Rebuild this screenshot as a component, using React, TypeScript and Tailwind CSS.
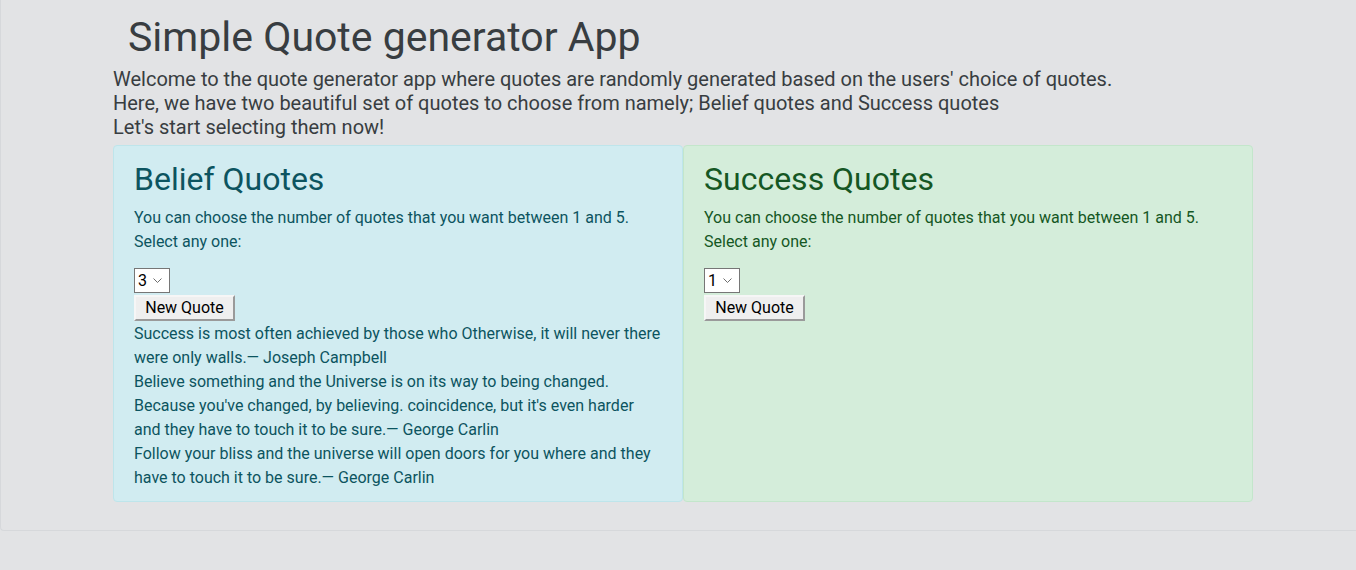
import { useState } from 'react';

const beliefQuotes = [
  'Success is most often achieved by those who Otherwise, it will never there were only walls.— Joseph Campbell',
  "Believe something and the Universe is on its way to being changed. Because you've changed, by believing. coincidence, but it's even harder and they have to touch it to be sure.— George Carlin",
  'Follow your bliss and the universe will open doors for you where and they have to touch it to be sure.— George Carlin',
];

function QuoteCard({
  title,
  tone,
  initial,
  quotes,
}: {
  title: string;
  tone: 'info' | 'success';
  initial: string;
  quotes: string[];
}) {
  const [count, setCount] = useState(initial);
  const box =
    tone === 'info'
      ? 'bg-[#d1ecf1] border-[#bee5eb] text-[#0c5460]'
      : 'bg-[#d4edda] border-[#c3e6cb] text-[#155724]';

  return (
    <div className={`flex-1 rounded border px-5 pt-[14px] pb-[11px] ${box}`}>
      {/* Card heading */}
      <h2 className="mb-2 text-[32px] leading-[1.2]">{title}</h2>
      <p className="text-base leading-6">
        You can choose the number of quotes that you want between 1 and 5.
        <br />
        Select any one:
      </p>

      <div className="mt-[14px] flex">
        <div className="relative">
          <select
            value={count}
            onChange={(e) => setCount(e.target.value)}
            className="block h-[25px] w-9 appearance-none border border-[#767676] bg-white pl-[3px] text-base leading-none text-black outline-none"
          >
            {['1', '2', '3', '4', '5'].map((n) => (
              <option key={n}>{n}</option>
            ))}
          </select>
          <svg
            className="pointer-events-none absolute right-[8px] top-[10px]"
            width="9"
            height="6"
            viewBox="0 0 9 6"
            fill="none"
          >
            <path d="M0.5 0.5 L4.5 4.5 L8.5 0.5" stroke="#6d6d6d" strokeWidth="1" />
          </svg>
        </div>
      </div>
      <button className="mt-[2px] block h-[26px] w-[101px] border-2 border-t-[#f6f6f6] border-l-[#f6f6f6] border-r-[#9a9a9a] border-b-[#9a9a9a] bg-[#efefef] text-base leading-none text-black">
        New Quote
      </button>

      <div className="mt-px text-base leading-6">
        {quotes.map((q) => (
          <div key={q}>{q}</div>
        ))}
      </div>
    </div>
  );
}

export default function App() {
  return (
    <div
      className="min-h-[570px] bg-[#e2e3e5] text-[#383d41]"
      style={{ fontFamily: 'Roboto, "Noto Sans", sans-serif' }}
    >
      <div className="rounded-bl border-b border-l border-[#d6d8db] pb-[28px]">
        <div className="ml-[112px] w-[1140px]">
          <h1 className="pl-[15px] pt-[13px] text-[41px] leading-[48px]">Simple Quote generator App</h1>
          <p className="mt-[6px] text-[20px] leading-6">
            Welcome to the quote generator app where quotes are randomly generated based on the users' choice of quotes.
            <br />
            Here, we have two beautiful set of quotes to choose from namely; Belief quotes and Success quotes
            <br />
            Let's start selecting them now!
          </p>
          <div className="mt-[6px] flex">
            <QuoteCard title="Belief Quotes" tone="info" initial="3" quotes={beliefQuotes} />
            <QuoteCard title="Success Quotes" tone="success" initial="1" quotes={[]} />
          </div>
        </div>
      </div>
    </div>
  );
}
